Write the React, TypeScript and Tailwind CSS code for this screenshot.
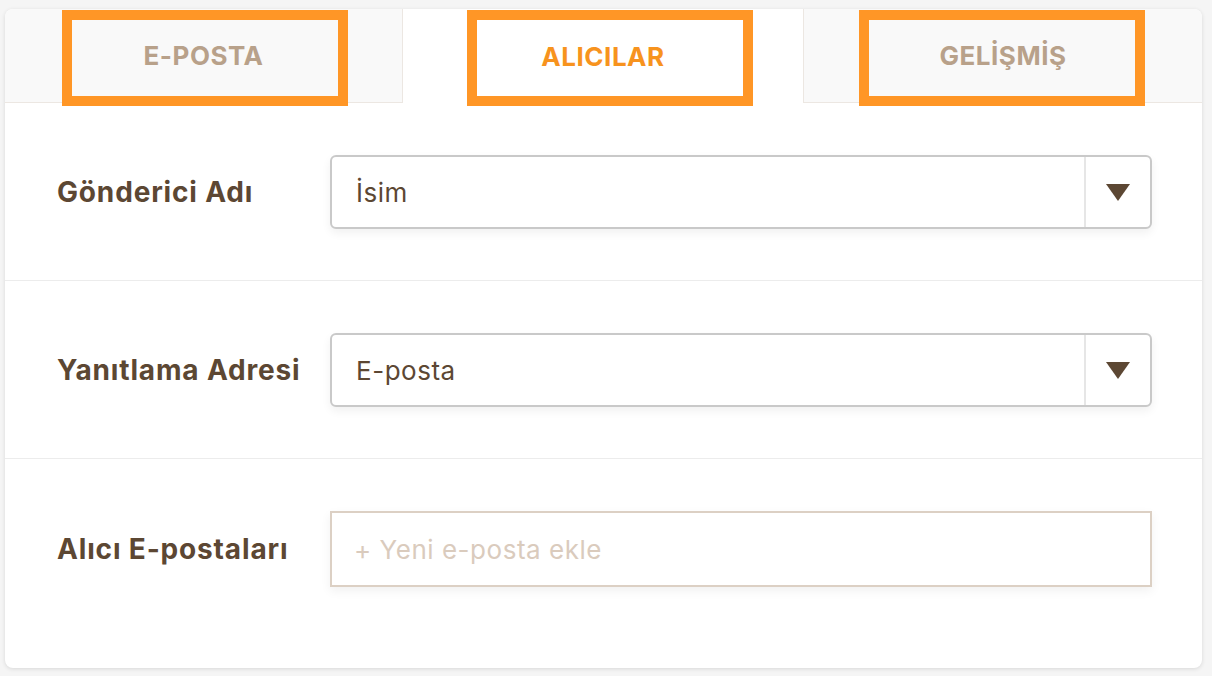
// App.tsx

const tabs = [
  { label: "E-POSTA", active: false, boxLeft: "left-[57px]", edge: "border-r" },
  { label: "ALICILAR", active: true, boxLeft: "left-[64px]", edge: "" },
  { label: "GELİŞMİŞ", active: false, boxLeft: "left-[55px]", edge: "border-l" },
]

function Caret() {
  return (
    <svg width="24" height="17" viewBox="0 0 24 17">
      <polygon points="0,0 24,0 12,17" fill="#5c4733" />
    </svg>
  )
}

function SelectBox({ value }: { value: string }) {
  return (
    <div className="flex-1 h-[74px] flex items-stretch rounded-[6px] border-2 border-[#c9c9c9] bg-white shadow-[0_4px_10px_rgba(0,0,0,0.06)]">
      <div className="flex-1 flex items-center pl-6 text-[26px] tracking-[0.02em] text-[#5c4733]">{value}</div>
      <div className="w-[66px] border-l-2 border-[#e6e6e6] flex items-center justify-center">
        <Caret />
      </div>
    </div>
  )
}

export default function App() {
  return (
    <div className="min-h-screen bg-[#f5f5f5] pt-[9px] pl-[5px] pr-[10px] font-['Inter',sans-serif]">
      <div className="w-[1197px] h-[659px] bg-white rounded-lg shadow-[0_1px_4px_rgba(0,0,0,0.12)] overflow-hidden">
        {/* tabs */}
        <div className="grid grid-cols-[398px_400px_399px] h-[94px]">
          {tabs.map((t) => (
            <div
              key={t.label}
              className={`relative flex items-center justify-center ${
                t.active ? "bg-white" : `bg-[#f9f9f9] border-b border-[#ece7e2] ${t.edge} border-[#ece7e2]`
              }`}
            >
              <span
                className={`text-[26px] font-bold tracking-[0.02em] ${
                  t.active ? "text-[#f7931e]" : "text-[#b8a18a]"
                }`}
              >
                {t.label}
              </span>
              <div className={`absolute top-[1px] ${t.boxLeft} w-[286px] h-[96px] border-[10px] border-[#ff9626] z-10`} />
            </div>
          ))}
        </div>

        {/* rows */}
        <div className="flex items-center pl-[52px] pr-[50px] pt-[52px] pb-[51px] border-b border-[#ececec]">
          <div className="w-[273px] text-[28px] font-bold tracking-[0.03em] text-[#5c4733]">Gönderici Adı</div>
          <SelectBox value="İsim" />
        </div>
        <div className="flex items-center pl-[52px] pr-[50px] pt-[52px] pb-[51px] border-b border-[#ececec]">
          <div className="w-[273px] text-[28px] font-bold tracking-[0.03em] text-[#5c4733]">Yanıtlama Adresi</div>
          <SelectBox value="E-posta" />
        </div>
        <div className="flex items-center pl-[52px] pr-[50px] pt-[52px] pb-[80px]">
          <div className="w-[273px] text-[28px] font-bold tracking-[0.03em] text-[#5c4733]">Alıcı E-postaları</div>
          <div className="flex-1 h-[76px] flex items-center pl-[22px] border-2 border-[#dcd0c4] bg-white shadow-[0_4px_10px_rgba(0,0,0,0.06)] text-[26px] tracking-[0.02em] text-[#dacbbd]">
            + Yeni e-posta ekle
          </div>
        </div>
      </div>
    </div>
  )
}
